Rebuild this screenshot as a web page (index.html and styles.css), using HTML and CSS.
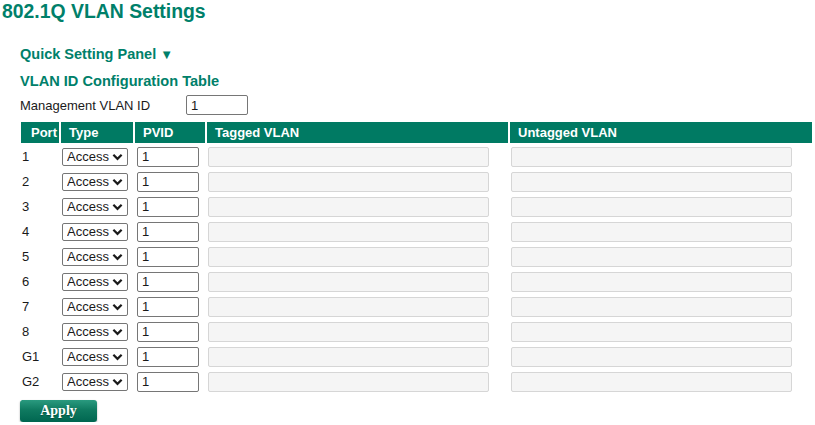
FILE: index.html
```html
<!DOCTYPE html>
<html>
<head>
<meta charset="utf-8">
<link rel="stylesheet" href="styles.css">
</head>
<body>
<h1 class="title">802.1Q VLAN Settings</h1>
<div class="content">
  <div class="panel-toggle">Quick Setting Panel <span class="arrow">▼</span></div>
  <h2 class="section">VLAN ID Configuration Table</h2>
  <div class="mgmt">
    <span class="mgmt-label">Management VLAN ID</span>
    <input class="num-input" type="text" value="1">
  </div>
  <table class="vlan">
    <colgroup>
      <col class="c-port"><col class="c-type"><col class="c-pvid"><col class="c-tag"><col class="c-untag">
    </colgroup>
    <thead>
      <tr><th class="h-port">Port</th><th>Type</th><th>PVID</th><th>Tagged VLAN</th><th>Untagged VLAN</th></tr>
    </thead>
    <tbody>
      <tr><td>1</td><td><span class="sel-wrap"><select class="type-sel"><option>Access</option></select><svg class="chev" viewBox="0 0 12 8"><path d="M1.5 1.5 L6 6 L10.5 1.5"/></svg></span></td><td><input class="num-input pvid" type="text" value="1"></td><td><input class="vlan-list" type="text" disabled></td><td><input class="vlan-list" type="text" disabled></td></tr>
      <tr><td>2</td><td><span class="sel-wrap"><select class="type-sel"><option>Access</option></select><svg class="chev" viewBox="0 0 12 8"><path d="M1.5 1.5 L6 6 L10.5 1.5"/></svg></span></td><td><input class="num-input pvid" type="text" value="1"></td><td><input class="vlan-list" type="text" disabled></td><td><input class="vlan-list" type="text" disabled></td></tr>
      <tr><td>3</td><td><span class="sel-wrap"><select class="type-sel"><option>Access</option></select><svg class="chev" viewBox="0 0 12 8"><path d="M1.5 1.5 L6 6 L10.5 1.5"/></svg></span></td><td><input class="num-input pvid" type="text" value="1"></td><td><input class="vlan-list" type="text" disabled></td><td><input class="vlan-list" type="text" disabled></td></tr>
      <tr><td>4</td><td><span class="sel-wrap"><select class="type-sel"><option>Access</option></select><svg class="chev" viewBox="0 0 12 8"><path d="M1.5 1.5 L6 6 L10.5 1.5"/></svg></span></td><td><input class="num-input pvid" type="text" value="1"></td><td><input class="vlan-list" type="text" disabled></td><td><input class="vlan-list" type="text" disabled></td></tr>
      <tr><td>5</td><td><span class="sel-wrap"><select class="type-sel"><option>Access</option></select><svg class="chev" viewBox="0 0 12 8"><path d="M1.5 1.5 L6 6 L10.5 1.5"/></svg></span></td><td><input class="num-input pvid" type="text" value="1"></td><td><input class="vlan-list" type="text" disabled></td><td><input class="vlan-list" type="text" disabled></td></tr>
      <tr><td>6</td><td><span class="sel-wrap"><select class="type-sel"><option>Access</option></select><svg class="chev" viewBox="0 0 12 8"><path d="M1.5 1.5 L6 6 L10.5 1.5"/></svg></span></td><td><input class="num-input pvid" type="text" value="1"></td><td><input class="vlan-list" type="text" disabled></td><td><input class="vlan-list" type="text" disabled></td></tr>
      <tr><td>7</td><td><span class="sel-wrap"><select class="type-sel"><option>Access</option></select><svg class="chev" viewBox="0 0 12 8"><path d="M1.5 1.5 L6 6 L10.5 1.5"/></svg></span></td><td><input class="num-input pvid" type="text" value="1"></td><td><input class="vlan-list" type="text" disabled></td><td><input class="vlan-list" type="text" disabled></td></tr>
      <tr><td>8</td><td><span class="sel-wrap"><select class="type-sel"><option>Access</option></select><svg class="chev" viewBox="0 0 12 8"><path d="M1.5 1.5 L6 6 L10.5 1.5"/></svg></span></td><td><input class="num-input pvid" type="text" value="1"></td><td><input class="vlan-list" type="text" disabled></td><td><input class="vlan-list" type="text" disabled></td></tr>
      <tr><td>G1</td><td><span class="sel-wrap"><select class="type-sel"><option>Access</option></select><svg class="chev" viewBox="0 0 12 8"><path d="M1.5 1.5 L6 6 L10.5 1.5"/></svg></span></td><td><input class="num-input pvid" type="text" value="1"></td><td><input class="vlan-list" type="text" disabled></td><td><input class="vlan-list" type="text" disabled></td></tr>
      <tr><td>G2</td><td><span class="sel-wrap"><select class="type-sel"><option>Access</option></select><svg class="chev" viewBox="0 0 12 8"><path d="M1.5 1.5 L6 6 L10.5 1.5"/></svg></span></td><td><input class="num-input pvid" type="text" value="1"></td><td><input class="vlan-list" type="text" disabled></td><td><input class="vlan-list" type="text" disabled></td></tr>
    </tbody>
  </table>
  <button class="apply" type="button">Apply</button>
</div>
</body>
</html>
```
FILE: styles.css
```css
body {
  margin: 0;
  font-family: "Liberation Sans", Arial, sans-serif;
  font-size: 13px;
  color: #1a1a1a;
  background: #fff;
}

.title {
  margin: 0;
  padding-left: 2px;
  font-size: 19.4px;
  line-height: 23px;
  font-weight: bold;
  color: #00806a;
}

.content {
  padding-left: 19px;
  padding-right: 1px;
}

.panel-toggle {
  margin-top: 23px;
  margin-left: 1px;
  font-size: 14.5px;
  line-height: 16px;
  font-weight: bold;
  color: #00806a;
}

.arrow {
  font-size: 13px;
}

.section {
  margin: 10px 0 0 1px;
  font-size: 14.6px;
  line-height: 16px;
  font-weight: bold;
  color: #00806a;
}

.mgmt {
  display: flex;
  align-items: center;
  margin: 6px 0 0 1px;
  height: 20px;
}

.mgmt-label {
  width: 166px;
}

.num-input {
  box-sizing: border-box;
  width: 62px;
  height: 20px;
  margin: 0;
  padding: 0 4px;
  border: 1px solid #767676;
  border-radius: 2px;
  font-family: "Liberation Sans", Arial, sans-serif;
  font-size: 13px;
  color: #1a1a1a;
  background: #fff;
}

.vlan {
  table-layout: fixed;
  width: 795px;
  border-spacing: 2px;
  margin-top: 5px;
}

.c-port { width: 38px; }
.c-type { width: 72px; }
.c-pvid { width: 70px; }
.c-tag { width: 301px; }
.c-untag { width: 302px; }

.vlan th {
  height: 21px;
  padding: 0 0 0 8px;
  background: #007a63;
  color: #fff;
  font-size: 13px;
  font-weight: bold;
  text-align: left;
}

.vlan th.h-port {
  padding-left: 10px;
}

.vlan td {
  height: 23px;
  padding: 0 1px;
  vertical-align: middle;
  white-space: nowrap;
}

.sel-wrap {
  position: relative;
  display: block;
  width: 66px;
  height: 18px;
}

.type-sel {
  -webkit-appearance: none;
  appearance: none;
  box-sizing: border-box;
  width: 66px;
  height: 18px;
  margin: 0;
  padding: 0 0 0 4px;
  border: 1px solid #767676;
  border-radius: 2px;
  font-family: "Liberation Sans", Arial, sans-serif;
  font-size: 13px;
  line-height: 16px;
  color: #1a1a1a;
  background: #fff;
  display: block;
}

.chev {
  position: absolute;
  right: 5px;
  top: 5px;
  width: 11px;
  height: 8px;
  fill: none;
  stroke: #1a1a1a;
  stroke-width: 2.4;
  pointer-events: none;
}

.pvid {
  display: block;
  margin-left: 1px;
}

.vlan-list {
  display: block;
  box-sizing: border-box;
  width: 281px;
  height: 20px;
  margin: 0;
  border: 1px solid #d6d6d6;
  border-radius: 2px;
  background: #f5f5f5;
}

.apply {
  display: block;
  margin: 5px 0 0 1px;
  width: 77px;
  height: 22px;
  padding: 0;
  border: none;
  border-radius: 3px;
  background: linear-gradient(to bottom, #2a9a7f 0%, #0f7a60 45%, #006650 100%);
  box-shadow: 0 1px 2px rgba(0, 0, 0, 0.35);
  color: #fff;
  font-family: "Liberation Serif", "Times New Roman", serif;
  font-size: 14px;
  font-weight: bold;
  text-shadow: 0 1px 1px rgba(0, 0, 0, 0.3);
}
```
